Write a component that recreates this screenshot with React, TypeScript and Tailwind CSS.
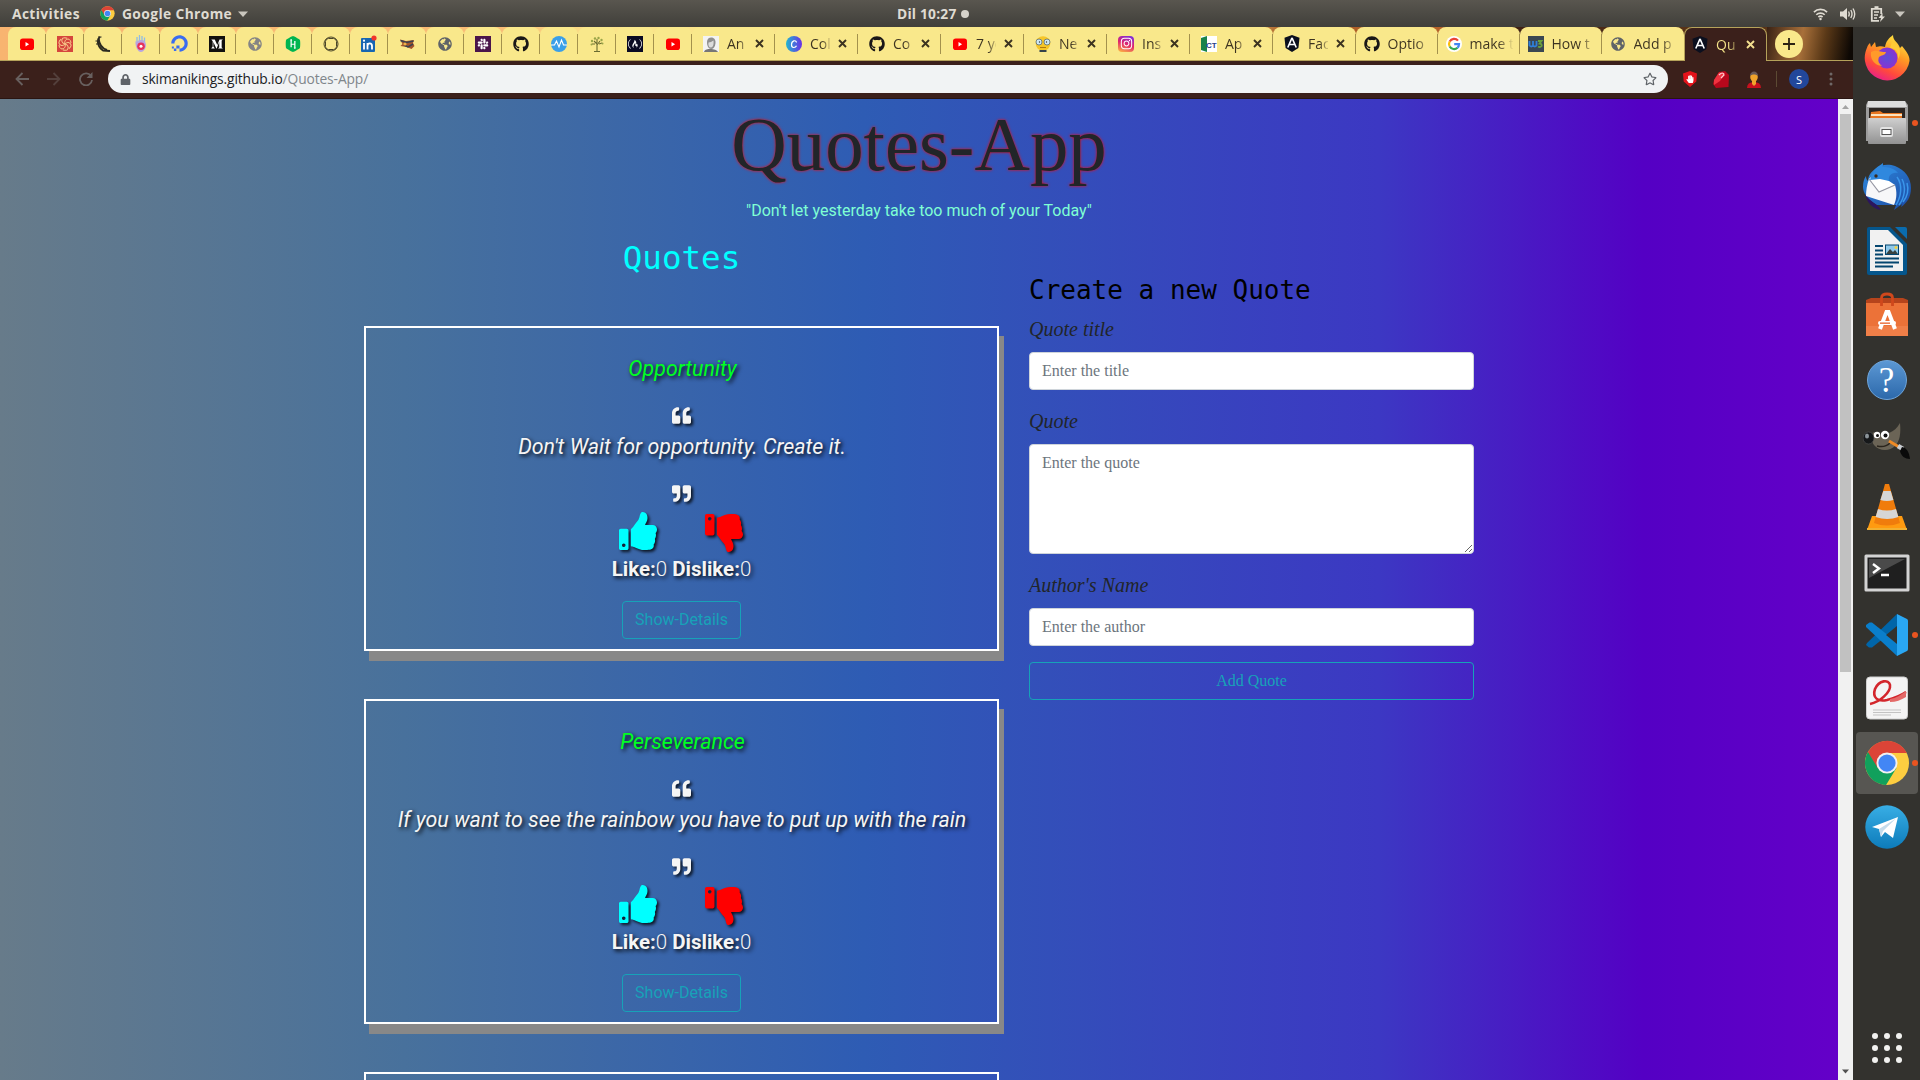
import React from "react";
import {
  FaDigitalOcean,
  FaFreeCodeCamp,
  FaGithub,
  FaGlobeAmericas,
  FaHackerrank,
  FaHandPaper,
  FaInstagram,
  FaLock,
  FaMediumM,
  FaQuoteLeft,
  FaQuoteRight,
  FaRegStar,
  FaSlack,
  FaThumbsUp,
} from "react-icons/fa";

const UI = "font-['Open_Sans','Noto_Sans',sans-serif]";

/* ---------- favicons ---------- */

const YouTube = () => (
  <svg width="16" height="16" viewBox="0 0 16 16">
    <rect x="1" y="2.5" width="14" height="11.5" rx="2.8" fill="#f00" />
    <path d="M6.5 6v4.4l3.6-2.2z" fill="#fff" />
  </svg>
);
const Swirl = () => (
  <svg width="16" height="16" viewBox="0 0 16 16" fill="none" stroke="#f7c98a">
    <rect width="16" height="16" fill="#d5463d" stroke="none" />
    {[0, 60, 120, 180, 240, 300].map((a) => (
      <path key={a} d="M8 8C7 5 9 2.500 12 3.200Q14 4.500 14 7" strokeWidth="1" transform={`rotate(${a} 8 8)`} />
    ))}
  </svg>
);
const Flask = () => (
  <svg width="16" height="16" viewBox="0 0 16 16" fill="none" stroke="#2b2a20">
    <path d="M5 .8C1.500 4 2.500 11 8 14.500L15 15" strokeWidth="1.800" />
    <path d="M3.500 2.500C4 8 7 12.500 12 14" strokeWidth="2.200" />
    <path d="M3 1h3.500M.5 5h3M1 8h3" strokeWidth="1.200" />
  </svg>
);
const Flame = () => (
  <svg width="16" height="17" viewBox="0 0 16 17">
    <path d="M4 2v6M6.500 0v6M9 1v5M11.500 2.500v5" stroke="#8fbce6" strokeWidth="1.300" />
    <path d="M2.500 6c1 2 2-1 5.500-1s4.500 2 5 4.500S11 17 8 17 2 12 2.500 6z" fill="#b9a5e0" />
    <circle cx="8" cy="11.300" r="3.800" fill="#e8325a" />
    <circle cx="8" cy="11.300" r="1.500" fill="#fff" />
  </svg>
);
const Ocean = () => <FaDigitalOcean size={17} color="#3a6cf0" />;
const Medium = () => (
  <span className="flex size-4 items-center justify-center bg-[#12100e]">
    <FaMediumM size={12} color="#fff" />
  </span>
);
const Globe = ({ color = "#5f6368" }: { color?: string }) => <FaGlobeAmericas size={14} color={color} />;
const GreyGlobe = () => <Globe color="#858585" />;
const Hacker = () => <FaHackerrank size={16} color="#00b551" className="rounded-[5px] bg-[radial-gradient(#fff_50%,transparent_55%)]" />;
const RoundFrame = () => (
  <svg width="16" height="16" viewBox="0 0 16 16" fill="none" stroke="#4a4528">
    <circle cx="8" cy="8" r="7" />
    <rect x="2.500" y="2.500" width="11" height="11" rx="3" />
  </svg>
);
const LinkedIn = () => (
  <svg width="16" height="18" viewBox="0 0 16 18">
    <rect y="3" width="14" height="14" rx="1" fill="#1766b2" />
    <path d="M3 8v6.500M6.500 14.500V8M6.500 11c0-3.500 4.500-3.500 4.500 0v3.500" stroke="#fff" strokeWidth="1.800" fill="none" />
    <circle cx="3" cy="5.700" r="1.100" fill="#fff" />
    <circle cx="13" cy="3" r="2.600" fill="#f0342c" />
  </svg>
);
const Patch = () => (
  <svg width="16" height="16" viewBox="0 0 16 16">
    <path d="M1 3.500l6 1.500 8-1-1 3 1.500 3-3 3-5-2-6-1 2-2z" fill="#a4542a" />
    <path d="M1.500 4.500l6 2 7-1.500M5 9l4 2 5-3" stroke="#3a4250" strokeWidth="1.500" fill="none" />
    <circle cx="6" cy="8" r="1.600" fill="#f0b048" />
  </svg>
);
const Slack = () => (
  <span className="flex size-4 items-center justify-center bg-[#4a154b]">
    <FaSlack size={12} color="#fff" />
  </span>
);
const GitHub = () => <FaGithub size={16} color="#191717" />;
const Pulse = () => (
  <svg width="16" height="16" viewBox="0 0 16 16" fill="none">
    <circle cx="8" cy="8" r="8" fill="#3a9fe8" />
    <path d="M0 9h3.500L5.500 5l2.500 6 2.500-7 2 5H16" stroke="#fff" strokeWidth="1.100" />
  </svg>
);
const Tree = () => (
  <svg width="16" height="16" viewBox="0 0 16 16" fill="none">
    <path d="M8 15V8L5 5M8 9l3-4M8 7V3M5 15.500h6M6 8L3 8M10 8l3-1" stroke="#6a6b30" strokeWidth="1.100" />
    <g fill="#9aa548">
      <circle cx="3" cy="5" r="1.200" />
      <circle cx="6" cy="2.500" r="1.200" />
      <circle cx="9.500" cy="2" r="1.200" />
      <circle cx="12.500" cy="4" r="1.200" />
      <circle cx="2.500" cy="8.500" r="1" />
      <circle cx="13.500" cy="7.500" r="1" />
    </g>
  </svg>
);
const Camp = () => (
  <span className="flex size-4 items-center justify-center bg-[#0a0a23]">
    <FaFreeCodeCamp size={14} color="#fff" />
  </span>
);
const Portrait = () => (
  <svg width="16" height="16" viewBox="0 0 16 16">
    <rect width="16" height="16" fill="#f3f3f3" />
    <path d="M4 6c0-6 9-6 8.500 1-.3 4-2 6-4.500 6S4 10 4 6z" fill="#8f8f8f" />
    <path d="M5.500 6.500c2 0 3-1 5-2 .5 4-.5 7-2.500 7s-3-2-2.500-5z" fill="#dcdcdc" />
    <path d="M1 16c1-3 4-3 6-3s6 0 8 3z" fill="#777" />
  </svg>
);
const Canva = () => (
  <svg width="16" height="16" viewBox="0 0 16 16">
    <defs>
      <linearGradient id="cv" x1="0" x2="1">
        <stop offset="0" stopColor="#20b6d0" />
        <stop offset="1" stopColor="#6b2fe6" />
      </linearGradient>
    </defs>
    <circle cx="8" cy="8" r="8" fill="url(#cv)" />
    <path d="M10.500 6.500C10 3.500 5.500 4.500 5.500 8.800c0 3.700 4 3.200 5 1" fill="none" stroke="#fff" strokeWidth="1.200" />
  </svg>
);
const Nerd = () => (
  <svg width="16" height="16" viewBox="0 0 16 16">
    <circle cx="8" cy="7.500" r="7.300" fill="#f6c628" />
    <circle cx="4" cy="6" r="3" fill="#cfe8f4" stroke="#5c6d70" strokeWidth=".8" />
    <circle cx="12" cy="6" r="3" fill="#cfe8f4" stroke="#5c6d70" strokeWidth=".8" />
    <circle cx="4.500" cy="6" r=".7" fill="#333" />
    <circle cx="11.500" cy="6" r=".7" fill="#333" />
    <path d="M5 11.500h6" stroke="#b07a10" />
    <rect x="4.500" y="14" width="7" height="2" fill="#34424a" />
  </svg>
);
const Insta = () => (
  <span className="flex size-4 items-center justify-center rounded-[4px] bg-[linear-gradient(200deg,#7a2ee0_5%,#e0246c_50%,#fcb045_95%)]">
    <FaInstagram size={13} color="#fff" />
  </span>
);
const Act = () => (
  <svg width="16" height="16" viewBox="0 0 16 16">
    <rect width="16" height="16" fill="#fff" />
    <path d="M0 2l6-2v16l-6-2z" fill="#17834b" />
    <text x="5" y="11.500" fontSize="8" fontWeight="700" fill="#26408a" fontFamily="Liberation Sans">CT</text>
  </svg>
);
const AngularTab = () => (
  <svg className="shrink-0" width="16" height="17" viewBox="0 0 17 18">
    <path d="M8.500 0l8 2.800-1.200 11L8.500 18l-6.800-4.200L.5 2.800z" fill="#0b0f1e" />
    <path d="M8.500 3L4 13.200M8.500 3L13 13.200M6 10h5" stroke="#fff" strokeWidth="1.700" fill="none" />
  </svg>
);
const Google = () => (
  <svg width="16" height="16" viewBox="0 0 16 16" fill="none" strokeWidth="2.200">
    <circle cx="8" cy="8" r="8" fill="#fff" />
    <path d="M12 4.600A5 5 0 0 0 3.700 5.500" stroke="#ea4335" />
    <path d="M3.700 5.500a5 5 0 0 0 0 5" stroke="#fbbc05" />
    <path d="M3.700 10.500a5 5 0 0 0 7.800 1.200" stroke="#34a853" />
    <path d="M11.500 11.700A5 5 0 0 0 13 8.200H8.200" stroke="#4285f4" />
  </svg>
);
const W3 = () => (
  <svg width="16" height="16" viewBox="0 0 16 16" fill="none" strokeWidth="1.800">
    <rect width="16" height="16" fill="#3b4752" />
    <path d="M1.500 5v4.500q1.800 2 3.500 0V5v4.500q1.800 2 3.500 0V5" stroke="#2f7fd8" />
    <path d="M10 5h3.500l-2 2.500q3 .5 2 2.700-1.500 1.500-3.500.3" stroke="#6aa03c" />
  </svg>
);

const smallTabs = [
  YouTube, Swirl, Flask, Flame, Ocean, Medium, GreyGlobe, Hacker, RoundFrame,
  LinkedIn, Patch, Globe, Slack, GitHub, Pulse, Tree, Camp, YouTube,
];

const wideTabs: { icon: React.ComponentType; text: string; close: boolean }[] = [
  { icon: Portrait, text: "An", close: true },
  { icon: Canva, text: "Col", close: true },
  { icon: GitHub, text: "Co", close: true },
  { icon: YouTube, text: "7 yo", close: true },
  { icon: Nerd, text: "Ne", close: true },
  { icon: Insta, text: "Ins", close: true },
  { icon: Act, text: "Ap", close: true },
  { icon: AngularTab, text: "Fac", close: true },
  { icon: GitHub, text: "Optio", close: false },
  { icon: Google, text: "make t", close: false },
  { icon: W3, text: "How t", close: false },
  { icon: Globe, text: "Add p", close: false },
];

const Close = ({ color }: { color: string }) => (
  <svg width="9" height="9" viewBox="0 0 9 9" stroke={color} strokeWidth="1.900">
    <path d="M1 1l7 7M8 1L1 8" />
  </svg>
);

const Caret = () => (
  <svg width="10" height="6" viewBox="0 0 10 6">
    <path d="M0 .5h10L5 6z" fill="#c9c6be" />
  </svg>
);

const TopBar = () => (
  <div className={`flex h-[27px] w-full bg-linear-to-b from-[#59564f] to-[#403f3a] text-[13.8px] leading-[27px] font-bold text-[#dfdbd2] ${UI}`}>
    <div className="flex w-[897px] items-center">
      <span className="ml-[12px] w-[88px] tracking-[0.38px]">Activities</span>
      <ChromeLogo size={15} />
      <span className="ml-[7px] w-[116px] whitespace-nowrap tracking-[0.38px]">Google Chrome</span>
      <Caret />
    </div>
    <div className="flex flex-1 items-center">
      <span className="w-[64px] whitespace-nowrap tracking-[0.2px]">Dil 10:27</span>
      <span className="size-2 rounded-full bg-[#d5d2ca]" />
    </div>
    <div className="flex items-center pr-[15px]">
      <svg width="15" height="14" viewBox="0 0 16 14" fill="none" stroke="#dfdbd2" strokeWidth="1.800">
        <path d="M1 5a10 10 0 0 1 14 0M3.500 7.800a6.500 6.500 0 0 1 9 0M5.800 10.300a3 3 0 0 1 4.400 0" />
        <circle cx="8" cy="12.300" r="1.300" fill="#dfdbd2" stroke="none" />
      </svg>
      <svg className="ml-3" width="16" height="14" viewBox="0 0 16 14" fill="none" stroke="#dfdbd2" strokeWidth="1.400">
        <path d="M0 4.500h3L7 1v12L3 9.500H0z" fill="#dfdbd2" stroke="none" />
        <path d="M8.500 4.500q1.500 2.500 0 5M10.800 3q2.400 4 0 8M13 1.500q3.400 5.500 0 11" />
      </svg>
      <svg className="ml-[14px]" width="15" height="16" viewBox="0 0 15 16" fill="none" stroke="#dfdbd2">
        <path d="M9 14.800H1.800V2.800h9.400V8" strokeWidth="1.800" />
        <path d="M4.500 1.200h4" strokeWidth="2" />
        <path d="M4 6h5M4 9h4M4 12h3" strokeWidth="1.400" />
        <path d="M12.500 7l-4 5h2.500l-1 4 5-5.500h-2.500z" fill="#dfdbd2" stroke="none" />
      </svg>
      <span className="ml-[10px] flex">
        <Caret />
      </span>
    </div>
  </div>
);

const TabStrip = () => (
  <div
    className={`flex h-[34px] w-full border-b border-[#b5a25a] bg-[linear-gradient(90deg,#f8b470_0px,#f9bd76_500px,#fbe38a_600px,#f9e68a_1200px,#a85a24_1290px,#b5622a_1440px,#3a1e14_1480px,#5a3418_1700px)] ${UI}`}
  >
    <div className="flex pl-[8px]">
      {smallTabs.map((Icon, i) => (
        <div key={i} className="relative flex h-[33px] w-[38px] items-center justify-center rounded-t-lg bg-[#f9e88b]">
          <Icon />
          <span className="absolute top-[7px] right-0 h-[20px] w-px bg-[#a3914d]" />
        </div>
      ))}
      {wideTabs.map(({ icon: Icon, text, close }, i) => (
        <div
          key={i}
          className={`relative flex h-[33px] items-center rounded-t-lg bg-[#f9e88b] ${
            close ? "w-[83px] pl-[11px]" : "w-[82px] pl-[7.5px]"
          }`}
        >
          <span className="flex w-4 shrink-0 justify-center">
            <Icon />
          </span>
          <span
            className={`ml-[8px] overflow-hidden bg-clip-text text-[14px] whitespace-nowrap text-transparent ${
              close
                ? "w-[20px] bg-[linear-gradient(90deg,#3c3320_60%,#d5c477)]"
                : "w-[43px] bg-[linear-gradient(90deg,#3c3320_65%,#f0df86)]"
            }`}
          >
            {text}
          </span>
          {close && (
            <span className="ml-[8px] flex">
              <Close color="#3c3320" />
            </span>
          )}
          {i < 11 && <span className="absolute top-[7px] right-0 h-[20px] w-px bg-[#a3914d]" />}
        </div>
      ))}
    </div>
    <div className="flex h-[34px] w-[83px] shrink-0 items-center rounded-t-lg border border-b-0 border-[#b5a25a] bg-[#3b201b] pb-px pl-[7px]">
      <AngularTab />
      <span className="ml-[8px] w-[21px] overflow-hidden bg-[linear-gradient(90deg,#f9e88b_60%,#6b5434)] bg-clip-text text-[14px] whitespace-nowrap text-transparent">
        Qu
      </span>
      <span className="ml-[9px] flex">
        <Close color="#f3df8f" />
      </span>
    </div>
    <div className="flex flex-1 items-center bg-[linear-gradient(100deg,#3a2214,#a8703a_40%,#5c3a18_65%,#0d0804_95%)] pl-[8px]">
      <span className="flex size-[28px] items-center justify-center rounded-full bg-[#f9e88b]">
        <svg width="12" height="12" viewBox="0 0 12 12" stroke="#2b2213" strokeWidth="1.800">
          <path d="M6 0v12M0 6h12" />
        </svg>
      </span>
    </div>
  </div>
);

const Toolbar = () => (
  <div className={`flex h-[38px] w-full items-center border-b border-[#2a1512] bg-[#3b201b] pb-px ${UI}`}>
    <div className="flex w-[108px] items-center gap-[18px] pl-[15px]">
      <svg width="14" height="14" viewBox="0 0 14 14" fill="none" stroke="#68605f" strokeWidth="1.800">
        <path d="M14 7H1.500M7.500 1l-6 6 6 6" />
      </svg>
      <svg width="14" height="14" viewBox="0 0 14 14" fill="none" stroke="#54403c" strokeWidth="1.800">
        <path d="M0 7h12.500M6.500 1l6 6-6 6" />
      </svg>
      <svg width="14" height="14" viewBox="0 0 14 14" fill="none" stroke="#68605f" strokeWidth="1.800">
        <path d="M12 4A6 6 0 1 0 13 8" />
        <path d="M13.500 0v6H7.500z" fill="#68605f" stroke="none" />
      </svg>
    </div>
    <div className="flex h-[28px] w-[1560px] items-center rounded-full bg-[#f1f3f4]">
      <FaLock className="ml-[12px]" size={11} color="#5f6368" />
      <span className="ml-[11px] flex-1 text-[13.8px] tracking-[-0.12px] text-[#80868b]">
        <span className="text-[#202124]">skimanikings.github.io</span>/Quotes-App/
      </span>
      <FaRegStar className="mr-[11px]" size={14} color="#5f6368" />
    </div>
    <div className="flex flex-1 items-center pl-[15px]">
      <span className="flex h-4 w-[14px] items-center justify-center bg-[#e3131b] [clip-path:polygon(50%_0,100%_15%,95%_65%,50%_100%,5%_65%,0_15%)]">
        <FaHandPaper size={8} color="#fff" />
      </span>
      <svg className="ml-[16px]" width="16" height="17" viewBox="0 0 16 17">
        <path d="M6 1l6-1 4 4-.5 12L3 17l-3-4 1-4z" fill="#b8081c" />
        <path d="M6 1.500l6 .5-5 8-6 4 0-5z" fill="#ef3340" />
        <path d="M6 4q4-4 5 0l-3 3" fill="none" stroke="#ffc9cc" strokeWidth="1.200" />
      </svg>
      <svg className="ml-[18px]" width="14" height="17" viewBox="0 0 14 17">
        <path d="M0 17q0-6 7-6t7 6z" fill="#c8101e" />
        <path d="M5 9h4v4l-2 2-2-2z" fill="#f0a32c" />
        <ellipse cx="7" cy="6" rx="3.800" ry="4.500" fill="#f0a32c" />
        <path d="M3 5c0-6 8-6 8 0-2-2-6-2-8 0z" fill="#6a5a58" />
      </svg>
      <span className="ml-[15px] h-[16px] w-px bg-[#5c4a33]" />
      <span className="ml-[12px] flex size-[20px] items-center justify-center rounded-full bg-[#22479b] text-[11px] leading-none text-white">
        S
      </span>
      <svg className="ml-[20px]" width="4" height="14" viewBox="0 0 4 14" fill="#6f6867">
        <circle cx="2" cy="2" r="1.500" />
        <circle cx="2" cy="7" r="1.500" />
        <circle cx="2" cy="12" r="1.500" />
      </svg>
    </div>
  </div>
);

/* ---------- page ---------- */

const shadow = "[text-shadow:2px_2px_4px_#000]";
const iconShadow = "[filter:drop-shadow(2px_2px_1.5px_rgba(0,0,0,.8))]";

const QuoteCard = ({ title, text }: { title: string; text: string }) => (
  <article className="mb-12 flex h-[325px] w-[635px] shrink-0 flex-col items-center border-2 border-white pt-[26px] text-[21.4px] leading-[30px] text-[#f5f5f5] shadow-[5px_10px_0_#888]">
    <h5 className={`mb-[18px] pl-[2px] font-normal text-[#00ff23] italic ${shadow}`}>{title}</h5>
    <div className="flex h-[30px] items-center pb-[3px]">
      <FaQuoteLeft size={19} className={iconShadow} />
    </div>
    <p className={`mb-[18px] pl-[1px] font-normal whitespace-nowrap italic ${shadow}`}>{text}</p>
    <div className="flex h-[30px] items-center pb-[3px]">
      <FaQuoteRight size={19} className={iconShadow} />
    </div>
    <div className="flex h-[44px] gap-[48px] pr-px">
      <FaThumbsUp size={38} color="#00ffff" className={`mt-[2px] ${iconShadow}`} />
      <span className={`mt-[4px] ${iconShadow}`}>
        <FaThumbsUp size={38} color="#ff0000" className="-scale-y-100" />
      </span>
    </div>
    <p className={`mb-[17px] text-[20.5px] font-light whitespace-nowrap ${shadow}`}>
      <b className="font-bold">Like:</b>0 <b className="font-bold">Dislike:</b>0
    </p>
    <button className="h-[38px] w-[119px] rounded border border-[#17a2b8] text-[16px] leading-6 text-[#17a2b8]">
      Show-Details
    </button>
  </article>
);

const field =
  "block w-full rounded border border-[#ced4da] bg-white px-3 py-[6px] text-[16px] leading-6 placeholder:text-[#6c757d] not-italic";

const Page = () => (
  <div className="flex h-[981px] w-[1838px] flex-col items-center overflow-hidden bg-[linear-gradient(90deg,#677b8a_0%,#48719c_22%,#2e5cb4_47%,#3c38c3_75%,#5400c4_89.4%,#6400c8_100%)] font-[Roboto,sans-serif]">
    <h1 className="mb-2 h-[92.2px] shrink-0 font-['Liberation_Serif',serif] text-[76.8px] leading-[92.2px] text-[#212529] [text-shadow:0_0_3px_#f00]">
      Quotes-App
    </h1>
    <p className="mb-4 h-6 shrink-0 text-[16px] leading-6 text-[#7fffd4]">"Don't let yesterday take too much of your Today"</p>
    <div className="flex w-[1110px]">
      <section className="flex w-[635px] flex-col items-center">
        <h2 className="mb-[47.8px] font-['DejaVu_Sans_Mono',monospace] text-[32.5px] leading-[39px] text-[#00ffff]">Quotes</h2>
        <QuoteCard title="Opportunity" text="Don't Wait for opportunity. Create it." />
        <QuoteCard title="Perseverance" text="If you want to see the rainbow you have to put up with the rain" />
        <QuoteCard title="Dreams" text="The future belongs to those who believe in their dreams" />
      </section>
      <form className="ml-[30px] w-[445px] pt-[35.8px] font-['Liberation_Serif',serif]">
        <h2 className="mb-2 font-['DejaVu_Sans_Mono',monospace] text-[26px] leading-[31px] text-black">Create a new Quote</h2>
        <label className="mb-2 block text-[20px] leading-[30px] text-[#212529] italic">Quote title</label>
        <input className={`${field} mb-4 h-[38px]`} placeholder="Enter the title" />
        <label className="mb-2 block text-[20px] leading-[30px] text-[#212529] italic">Quote</label>
        <textarea className={`${field} mb-4 h-[110px] resize-y`} placeholder="Enter the quote" />
        <label className="mb-2 block text-[20px] leading-[30px] text-[#212529] italic">Author's Name</label>
        <input className={`${field} mb-4 h-[38px]`} placeholder="Enter the author" />
        <button type="button" className="h-[38px] w-full rounded border border-[#17a2b8] text-[16px] leading-6 text-[#17a2b8]">
          Add Quote
        </button>
      </form>
    </div>
  </div>
);

const Scrollbar = () => (
  <div className="flex w-[15px] flex-col items-center bg-[#f1f1f1]">
    <svg width="15" height="15" viewBox="0 0 15 15">
      <path d="M4 10h7L7.500 6z" fill="#a3a3a3" />
    </svg>
    <div className="h-[558px] w-[11px] bg-[#c1c1c1]" />
    <svg className="mt-auto" width="15" height="17" viewBox="0 0 15 17">
      <path d="M4 6.500h7L7.500 10.500z" fill="#505050" />
    </svg>
  </div>
);

/* ---------- dock ---------- */

const ChromeLogo = ({ size }: { size: number }) => (
  <svg width={size} height={size} viewBox="0 0 48 48">
    <circle cx="24" cy="24" r="23" fill="#fdcd40" />
    <path d="M24 24L4.100 12.500A23 23 0 0 0 23 47l11-18z" fill="#11a05c" />
    <path d="M4.100 12.500A23 23 0 0 1 44.800 13.500H24L14.500 29.500z" fill="#dc4437" />
    <circle cx="24" cy="24" r="11" fill="#f1f1f1" />
    <circle cx="24" cy="24" r="9" fill="#4286f5" />
  </svg>
);

const Firefox = () => (
  <svg className="mb-[2px]" width="48" height="48" viewBox="0 0 48 48">
    <defs>
      <linearGradient id="ff" x1=".8" y1="0" x2=".3" y2="1">
        <stop offset="0" stopColor="#fff044" />
        <stop offset=".4" stopColor="#ff9a24" />
        <stop offset=".75" stopColor="#ff4a3c" />
        <stop offset="1" stopColor="#e81e8c" />
      </linearGradient>
      <radialGradient id="ffg">
        <stop offset="0" stopColor="#5a50d8" />
        <stop offset="1" stopColor="#8a32d0" />
      </radialGradient>
    </defs>
    <path d="M30 1c0 6 5 7 7 13l2-2c4 5 8 10 7.500 15A22.500 22.500 0 1 1 2.500 18C4 14 4 12 7 9l1 4 4-5 1 5c4-1 6-1 9 0 1-6 4-9 8-12z" fill="url(#ff)" />
    <circle cx="24" cy="24" r="10.500" fill="url(#ffg)" />
    <path d="M8 18c5-3 9 0 15 0-1 4-5 3-7 5-2 5 1 7 3 9-8-1-12-7-11-14z" fill="#ff9a2a" />
    <path d="M27 14c6 0 9 5 8 11 4-6 2-15-6-17z" fill="#ffcb36" />
  </svg>
);
const Files = () => (
  <svg width="48" height="48" viewBox="0 0 48 48">
    <defs>
      <linearGradient id="fl" x2="0" y2="1">
        <stop offset="0" stopColor="#cfcfcf" />
        <stop offset="1" stopColor="#929292" />
      </linearGradient>
    </defs>
    <path d="M5 2h37l3 4v36H3V6z" fill="#9c9c9c" />
    <path d="M5 2h37l2 6H4z" fill="#dcdcdc" />
    <rect x="6" y="9" width="36" height="12" fill="#2c2622" />
    <path d="M8 13l9-1 3 2h19v6H7z" fill="#e87722" />
    <rect x="8" y="15" width="31" height="2" fill="#fbe3c0" />
    <rect x="5" y="19" width="38" height="26" rx="1" fill="url(#fl)" />
    <rect x="17" y="28" width="13" height="10" rx="2" fill="#e3e3e3" />
    <rect x="19" y="30.500" width="9" height="5" fill="#fff" stroke="#555" />
  </svg>
);
const Thunderbird = () => (
  <svg width="48" height="48" viewBox="0 0 48 48">
    <defs>
      <linearGradient id="tb" x1="0" x2=".8" y2="1">
        <stop offset="0" stopColor="#2f8be0" />
        <stop offset="1" stopColor="#1d4fa8" />
      </linearGradient>
    </defs>
    <path d="M12 6C18 1 26 1 32 3c10 4 16 12 16 22 0 9-4 15-10 19l1-3-8 6 2-5H14C5 38 0 30 0 24c0-5 1-8 3-11 0 3 1 4 2 5 0-5 3-9 7-12z" fill="url(#tb)" />
    <path d="M2 31c5 8 12 9 16 16C10 46 4 40 2 31z" fill="#2b1460" />
    <path d="M6 16l10 13 16-7c2 7 2 13-1 20L3 33c0-6 1-11 3-17z" fill="#f7f7f9" />
    <path d="M6 16l10 13 16-7-12-8-12 0z" fill="#fff" />
    <path d="M6 16l10 13 16-7" fill="none" stroke="#9a9aa4" strokeWidth="1.200" />
    <path d="M7 17C9 6 16 3 20 0c0 2 0 3-1 4 7 0 12 1 16 6-7-1-10 3-9 8l-9-2z" fill="#2f88de" />
    <circle cx="13" cy="13" r="1.700" fill="#3b2a1c" />
    <path d="M34 14c6 8 4 20-1 28M39 16c4 8 3 18-3 26M44 20c2 7 0 14-4 19" stroke="#3a96ea" strokeWidth="1.500" fill="none" />
  </svg>
);
const Writer = () => (
  <svg width="48" height="50" viewBox="0 0 48 50">
    <path d="M6 1h21l17 17v29a2 2 0 0 1-2 2H6a2 2 0 0 1-2-2V3a2 2 0 0 1 2-2z" fill="#05568c" />
    <path d="M7 4h18l15 15v26H7z" fill="#f1f1f1" />
    <path d="M32 1h10a2 2 0 0 1 2 2v10z" fill="#0a6cae" />
    <path d="M12 20h8M12 24.500h8M12 28.500h8M12 32.500h24M12 36.500h24M12 40.500h18" stroke="#04466f" strokeWidth="2" />
    <rect x="22.500" y="19" width="13" height="9.500" fill="#8fc9ea" stroke="#04466f" />
    <path d="M23 28l4-5 3 3 2-2 3 4z" fill="#39423f" />
    <circle cx="33" cy="21.500" r="1.500" fill="#f0d040" />
  </svg>
);
const Software = () => (
  <svg width="48" height="48" viewBox="0 0 48 48">
    <path d="M3 9l5-2h32l5 2v6H3z" fill="#b6441c" />
    <rect x="3" y="12" width="42" height="33" fill="#ec7238" />
    <rect x="3" y="35" width="42" height="10" fill="#f07f48" />
    <path d="M18.500 15V7q0-4 5.500-4t5.500 4v8" fill="none" stroke="#d0481c" strokeWidth="2.800" />
    <path d="M17 38l6.500-17h2L32 38" fill="none" stroke="#fff" strokeWidth="4" />
    <rect x="15" y="30" width="18" height="4" rx="2" fill="#fff" />
    <rect x="17" y="31.500" width="10" height="1.300" fill="#e8622a" />
  </svg>
);
const Help = () => (
  <span className="mt-[2px] flex size-[40px] items-center justify-center rounded-full border border-[#6fa6dd] bg-linear-to-b from-[#5c98d4] to-[#2c69ab] font-['Liberation_Serif',serif] text-[35px] leading-none text-white">
    ?
  </span>
);
const Gimp = () => (
  <svg className="mt-[2px]" width="48" height="48" viewBox="0 0 48 48">
    <path d="M10 12c4 5 10 4 16 1 5-2 8-5 11-10 1 10 0 18-5 23-6 6-16 5-21-1-3-4-2-9-1-13z" fill="#6b6456" />
    <ellipse cx="5.500" cy="18" rx="5.500" ry="6" fill="#16181a" stroke="#555" strokeWidth=".6" />
    <ellipse cx="4" cy="16" rx="2" ry="2.500" fill="#8c9499" />
    <circle cx="14" cy="15" r="3.200" fill="#fff" />
    <circle cx="22" cy="15" r="4.200" fill="#fff" />
    <circle cx="14.500" cy="15.500" r="1.500" fill="#111" />
    <circle cx="22.500" cy="15.500" r="2" fill="#111" />
    <path d="M14 26q8 2 13-3" fill="none" stroke="#2a241c" strokeWidth="1.500" />
    <path d="M26 21l10 6" stroke="#ef8a24" strokeWidth="3" />
    <path d="M35 26l5 3" stroke="#c9ccd0" strokeWidth="4.500" />
    <path d="M39 27c5 1 7 5 8 12-5 0-9-3-10-8z" fill="#0a0a0a" />
  </svg>
);
const Vlc = () => (
  <svg width="48" height="50" viewBox="0 0 48 50">
    <path d="M9 34h30l5 14H4z" fill="#ff9a10" />
    <path d="M4 46h40v2H4z" fill="#f2b030" />
    <path d="M22 2h4l11 39q-13 5-26 0z" fill="#f07c0c" />
    <path d="M20.300 9h7.400l2.700 9q-6.500 2-13 0z" fill="#d6d6d6" />
    <path d="M15 27q9 3 18 0l2.400 8q-11 4-22.800 0z" fill="#d6d6d6" />
  </svg>
);
const Terminal = () => (
  <svg className="mt-[3px]" width="46" height="38" viewBox="0 0 46 38">
    <rect x=".5" y=".5" width="45" height="37" rx="1.500" fill="#d3d3d3" />
    <rect x="3.500" y="3.500" width="39" height="31" fill="#1f1f1f" />
    <path d="M5 5h36L5 24z" fill="#4a4a4a" />
    <path d="M9 10l6 4.500-6 4.500M17 21h8" fill="none" stroke="#fff" strokeWidth="2.400" />
  </svg>
);
const VsCode = () => (
  <svg width="44" height="44" viewBox="0 0 44 44">
    <path d="M32 1L2 30l-1 2 3 2.500 3 0L34 13z" fill="#0065a9" />
    <path d="M32 43L1 14l0-2 3.500-2.500 2.500 0L34 31z" fill="#0a7ecb" />
    <path d="M32 1l10 5q1 .5 1 2v28q0 1.500-1 2l-10 5z" fill="#2aa7f3" />
    <path d="M32 13v18l-11-9z" fill="#33322e" />
  </svg>
);
const Evince = () => (
  <svg className="mb-[2px]" width="42" height="44" viewBox="0 0 42 44">
    <rect x=".5" y="1" width="41" height="42" rx="3.500" fill="#f4f4f4" stroke="#d0d0d0" />
    <path d="M4 28C14 26 25 16 24 9c-1-6-11-5-15 4-3 9 3 13 12 11 8-2 13-4 19-8" fill="none" stroke="#d3262c" strokeWidth="2.600" />
    <path d="M24 23c6-1 11-4 16-8v6c-5 3-10 5-16 5z" fill="#e46a68" />
    <path d="M7 34h28M7 36.500h28M7 39h18" stroke="#c3c3c3" />
  </svg>
);
const Telegram = () => (
  <svg width="44" height="44" viewBox="0 0 44 44">
    <defs>
      <linearGradient id="tg" x2="0" y2="1">
        <stop offset="0" stopColor="#38aee5" />
        <stop offset="1" stopColor="#0d7bba" />
      </linearGradient>
    </defs>
    <circle cx="22" cy="22" r="21.700" fill="url(#tg)" />
    <path d="M7 22l26-10-5 21-8-6-4 5-2-8z" fill="#fff" />
    <path d="M14 24l17-10.500L18 26l-2 6z" fill="#c4dcec" />
  </svg>
);
const DockChrome = () => <ChromeLogo size={46} />;

const dock: { icon: React.ComponentType; dot?: boolean; active?: boolean }[] = [
  { icon: Firefox },
  { icon: Files, dot: true },
  { icon: Thunderbird },
  { icon: Writer },
  { icon: Software },
  { icon: Help },
  { icon: Gimp },
  { icon: Vlc },
  { icon: Terminal },
  { icon: VsCode, dot: true },
  { icon: Evince },
  { icon: DockChrome, dot: true, active: true },
  { icon: Telegram },
];

const Dock = () => (
  <aside className="flex h-[1053px] w-[67px] flex-col items-center bg-[#33322e]">
    {dock.map(({ icon: Icon, dot, active }, i) => (
      <div key={i} className="relative flex h-16 w-full shrink-0 items-center justify-center">
        <span className={`flex size-[62px] items-center justify-center rounded ${active ? "bg-[#575652]" : ""}`}>
          <Icon />
        </span>
        {dot && <span className="absolute top-[29px] right-[2px] size-[6px] rounded-full bg-[#e95420]" />}
      </div>
    ))}
    <div className="mt-auto mb-[17px] grid grid-cols-3 gap-[6px]">
      {Array.from({ length: 9 }, (_, i) => (
        <span key={i} className="size-[6px] rounded-full bg-[#f2f2f0]" />
      ))}
    </div>
  </aside>
);

export default function App() {
  return (
    <div className="flex h-[1080px] w-[1920px] flex-col overflow-hidden">
      <TopBar />
      <div className="flex h-[1053px]">
        <main className="flex w-[1853px] flex-col">
          <TabStrip />
          <Toolbar />
          <div className="flex h-[981px]">
            <Page />
            <Scrollbar />
          </div>
        </main>
        <Dock />
      </div>
    </div>
  );
}
